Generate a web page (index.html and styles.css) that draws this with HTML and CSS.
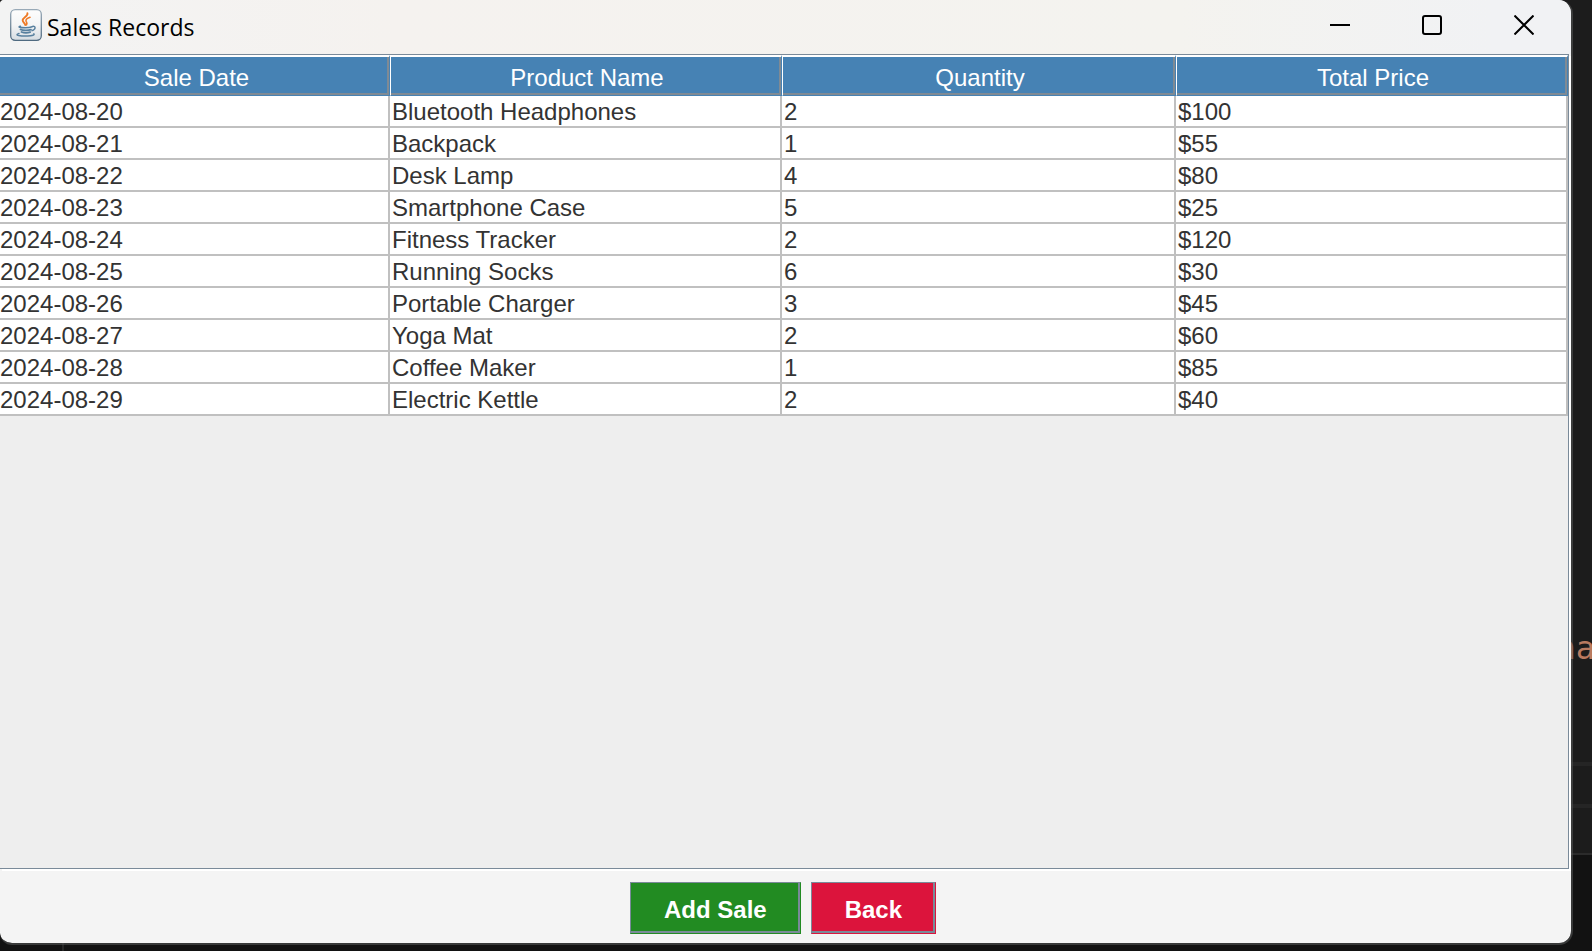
FILE: index.html
```html
<!DOCTYPE html>
<html lang="en">
<head>
<meta charset="utf-8">
<title>Sales Records</title>
<link rel="stylesheet" href="styles.css">
</head>
<body>
<div class="desktop">
  <div class="editor" aria-hidden="true">
    <span class="code">na</span>
    <div class="pane"></div>
    <div class="pane short"></div>
    <div class="base"></div>
  </div>
  <main class="window">
    <header class="titlebar">
      <svg class="app-icon" viewBox="0 0 32 32" aria-hidden="true">
        <defs>
          <linearGradient id="tile" x1="0" y1="0" x2="0" y2="1"><stop offset="0" stop-color="#fdfdfd"/><stop offset=".5" stop-color="#f4f5f6"/><stop offset="1" stop-color="#d5dce2"/></linearGradient>
          <linearGradient id="edge" x1="0" y1="0" x2="0" y2="1"><stop offset="0" stop-color="#98a9b7"/><stop offset="1" stop-color="#4f6a80"/></linearGradient>
        </defs>
        <rect x=".7" y=".7" width="30.600" height="30.600" rx="4.500" fill="url(#tile)" stroke="url(#edge)" stroke-width="1.300"/>
        <g fill="none" stroke="#ef7a25" stroke-linecap="round">
          <path d="M17.400 4.200c1 3.200-5.200 4.200-4.700 7.400.3 1.900 2.300 2.700 2.600 4.400" stroke-width="1.900"/>
          <path d="M20 8.200c-3 1-4.600 2.300-3.900 4.100.6 1.400 1.500 1.900.4 3.600" stroke-width="1.600"/>
        </g>
        <g fill="none" stroke="#58809f" stroke-linecap="round">
          <path d="M10.500 17.200c-3 .7-1.200 1.500 4.700 1.500 3.400 0 5.500-.4 7-1" stroke-width="1.500"/>
          <path d="M10.500 20.500c2.500 1.100 8 1 10.500.2M11.500 23c2.500.9 6.500.8 8.700.1" stroke-width="1.800"/>
          <path d="M22.500 17.400c3.500-.7 3.500 3-.4 4.300" stroke-width="1.400"/>
          <path d="M9 24.400c-6 1.800 2.500 2.900 8.500 2.600 5-.2 7.500-1.100 6.300-2.100" stroke-width="1.500"/>
        </g>
      </svg>
      <h1 class="title">Sales Records</h1>
      <div class="controls">
        <button class="control" type="button" aria-label="Minimize"><svg viewBox="0 0 20 20"><path d="M0 10h20"/></svg></button>
        <button class="control" type="button" aria-label="Maximize"><svg viewBox="0 0 20 20"><rect x="1" y="1" width="18" height="18" rx="2"/></svg></button>
        <button class="control" type="button" aria-label="Close"><svg viewBox="0 0 20 20"><path d="M.5.5l19 19M19.500.5l-19 19"/></svg></button>
      </div>
    </header>
    <section class="scroll">
      <table class="sales">
        <colgroup><col class="col-date"><col class="col-product"><col class="col-quantity"><col></colgroup>
        <thead><tr><th scope="col">Sale Date</th><th scope="col">Product Name</th><th scope="col">Quantity</th><th scope="col">Total Price</th></tr></thead>
        <tbody>
          <tr><td>2024-08-20</td><td>Bluetooth Headphones</td><td>2</td><td>$100</td></tr>
          <tr><td>2024-08-21</td><td>Backpack</td><td>1</td><td>$55</td></tr>
          <tr><td>2024-08-22</td><td>Desk Lamp</td><td>4</td><td>$80</td></tr>
          <tr><td>2024-08-23</td><td>Smartphone Case</td><td>5</td><td>$25</td></tr>
          <tr><td>2024-08-24</td><td>Fitness Tracker</td><td>2</td><td>$120</td></tr>
          <tr><td>2024-08-25</td><td>Running Socks</td><td>6</td><td>$30</td></tr>
          <tr><td>2024-08-26</td><td>Portable Charger</td><td>3</td><td>$45</td></tr>
          <tr><td>2024-08-27</td><td>Yoga Mat</td><td>2</td><td>$60</td></tr>
          <tr><td>2024-08-28</td><td>Coffee Maker</td><td>1</td><td>$85</td></tr>
          <tr><td>2024-08-29</td><td>Electric Kettle</td><td>2</td><td>$40</td></tr>
        </tbody>
      </table>
    </section>
    <footer class="actions">
      <button class="action add" type="button">Add Sale</button>
      <button class="action back" type="button">Back</button>
    </footer>
  </main>
</div>
</body>
</html>
```
FILE: styles.css
```css
* { box-sizing: border-box; }

body {
  margin: 0;
  font-family: "Liberation Sans", Arial, sans-serif;
  font-size: 24px;
}

.desktop {
  position: relative;
  display: flex;
  height: 100vh;
  padding: 0 19px 6px 0;
  background: #1c1c1c;
  overflow: hidden;
}

/* Editor showing behind the window */
.editor {
  position: absolute;
  inset: 0;
  display: flex;
  flex-direction: column;
  justify-content: flex-end;
}

.code {
  margin: 0 -3px 94px 0;
  font: 32px/40px "DejaVu Sans Mono", monospace;
  color: #b97a60;
  text-align: right;
}

.pane {
  height: 42px;
  border-top: 4px solid #252525;
}

.pane.short { height: 49px; }

.base {
  height: 98px;
  border-top: 2px solid #2b2b2b;
  background: linear-gradient(90deg, transparent 62px, #262626 62px, #262626 64px, transparent 64px), #121212;
}

.window {
  position: relative;
  flex: 1;
  display: flex;
  flex-direction: column;
  min-width: 0;
  border: solid rgba(94, 96, 97, 0.5);
  border-width: 0 2px 2px 0;
  border-radius: 4px 14px 14px 12px;
  background: #f4f4f4;
  background-clip: padding-box;
  overflow: hidden;
}

.titlebar {
  display: flex;
  align-items: center;
  height: 54px;
  padding: 0 1px 4px 10px;
  background: linear-gradient(90deg, #f3f3f3, #f5f2ef 25%, #f4f3ef 75%, #f1f2f4 95%);
}

.app-icon {
  width: 32px;
  height: 32px;
}

.title {
  flex: 1;
  margin: 0;
  padding: 4px 0 0 5px;
  font: 400 23px/32px "Open Sans", "Noto Sans", sans-serif;
  color: #000;
}

.controls { display: flex; }

.control {
  display: flex;
  align-items: center;
  justify-content: center;
  width: 92px;
  height: 50px;
  padding: 0;
  border: 0;
  background: none;
}

.control svg {
  width: 20px;
  height: 20px;
  fill: none;
  stroke: #000;
  stroke-width: 2;
}

.scroll {
  flex: 1;
  border: solid #7a8a99;
  border-width: 1px 1px 1px 0;
  margin-right: 2px;
  background: #eee;
  box-shadow: 2px 2px 0 #fff;
}

.sales {
  width: 100%;
  table-layout: fixed;
  border-collapse: separate;
  border-spacing: 0;
}

.col-date { width: 390px; }
.col-product { width: 25%; }
.col-quantity { width: 394px; }

.sales th {
  height: 41px;
  padding: 4px 0 0 2px;
  border-top: 2px solid #fff;
  border-bottom: 1px solid #4682b4;
  border-left: 1px solid #fff;
  border-right: 1px solid #4682b4;
  background: #4682b4;
  box-shadow: inset -2px -2px 0 #7f8a94;
  color: #fff;
  font-weight: 400;
  line-height: 28px;
}

.sales th:first-child {
  padding-left: 4px;
  border-left: 0;
}

.sales td {
  height: 32px;
  padding: 2px 0 0 2px;
  border-right: 2px solid #c0c0c0;
  border-bottom: 2px solid #c0c0c0;
  background: #fff;
  color: #333;
  line-height: 28px;
  white-space: nowrap;
}

.sales td:first-child { padding-left: 0; }

.actions {
  display: flex;
  justify-content: center;
  gap: 10px;
  padding: 13px 5px 9px 0;
}

.action {
  height: 52px;
  padding: 4px 33px 0;
  border: 1px solid #7a8a99;
  color: #fff;
  font: 700 24px/28px "Liberation Sans", Arial, sans-serif;
  box-shadow: inset -2px -2px 0 #7a8a99;
}

.add {
  border-right-color: #228b22;
  border-bottom-color: #228b22;
  background: #228b22;
}

.back {
  border-right-color: #dc143c;
  border-bottom-color: #dc143c;
  background: #dc143c;
}
```
